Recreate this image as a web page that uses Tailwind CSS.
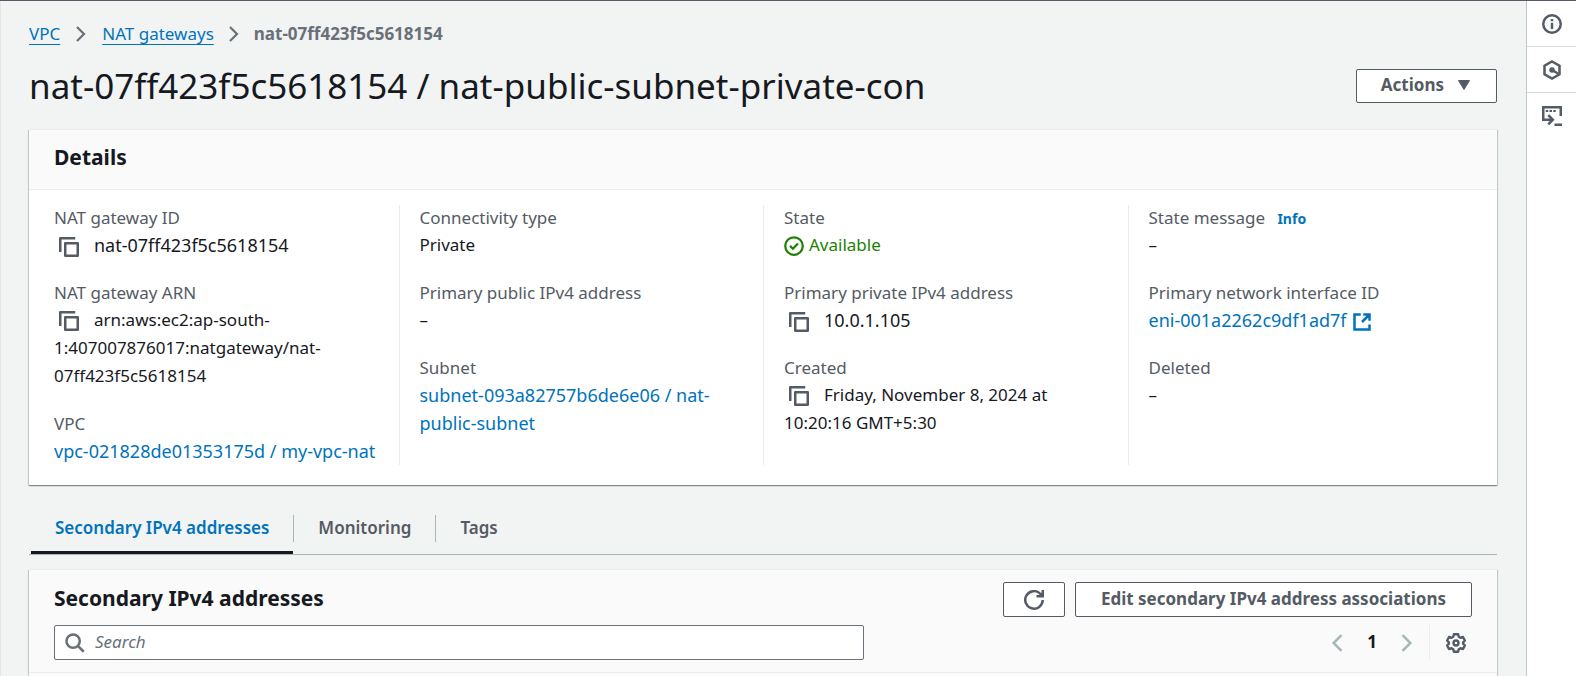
<!DOCTYPE html>
<html lang="en">
<head>
<meta charset="utf-8">
<meta name="viewport" content="width=device-width, initial-scale=1">
<title>NAT gateway details</title>
<script src="https://cdn.jsdelivr.net/npm/@tailwindcss/browser@4"></script>
</head>
<body class="bg-[#f2f3f3] font-['Noto_Sans','Open_Sans',sans-serif] text-[17px] leading-[28px] text-[#16191f]">
<svg class="hidden" aria-hidden="true">
  <symbol id="copy" viewBox="0 0 16 16"><path d="M1 12V1h12M5 5h10v10H5z" fill="none" stroke="currentColor" stroke-width="2" stroke-linejoin="round"/></symbol>
  <symbol id="chevron" viewBox="0 0 16 16"><path d="M4 1l7 7-7 7" fill="none" stroke="currentColor" stroke-width="2.200"/></symbol>
</svg>
<div class="flex min-h-screen border-t border-[#545b64]">
  <main class="flex min-w-0 flex-1 flex-col border-l border-[#e3e6e6] pr-[29px] pl-7 pt-[19px]">
    <nav aria-label="Breadcrumb">
      <ol class="flex items-center leading-[28px] text-[#687078]">
        <li><a href="#" class="text-[#0073bb] underline underline-offset-4">VPC</a></li>
        <li class="px-[13px]"><svg class="size-4" aria-hidden="true"><use href="#chevron"/></svg></li>
        <li><a href="#" class="text-[#0073bb] underline underline-offset-4">NAT gateways</a></li>
        <li class="px-3"><svg class="size-4" aria-hidden="true"><use href="#chevron"/></svg></li>
        <li class="font-bold" aria-current="page">nat-07ff423f5c5618154</li>
      </ol>
    </nav>
    <header class="flex items-center justify-between pt-[15px]">
      <h1 class="text-[35px] leading-[45px]">nat-07ff423f5c5618154 / nat-public-subnet-private-con</h1>
      <button type="button" class="flex h-[34px] items-center gap-3 rounded-xs border border-[#545b64] bg-white px-6 pb-px font-bold text-[#545b64]">Actions
        <svg class="size-4" viewBox="0 0 16 16" aria-hidden="true"><path d="M2.500 3.500h11L8 12.500z" fill="currentColor" stroke="currentColor" stroke-linejoin="round"/></svg>
      </button>
    </header>

    <section class="mt-[21px] border-t border-[#eaeded] bg-white shadow-[0_1px_1px_0_rgba(0,28,36,0.3),1px_1px_1px_0_rgba(0,28,36,0.15),-1px_1px_1px_0_rgba(0,28,36,0.15)]">
      <h2 class="border-b border-[#eaeded] bg-[#fafafa] px-[25px] pt-3 pb-4 text-[21px] leading-[31px] font-bold">Details</h2>
      <div class="grid grid-cols-4 px-[5px] pt-[15px] pb-5">
        <dl class="flex flex-col gap-[21px] px-5">
          <div>
            <dt class="leading-[26px] text-[#545b64]">NAT gateway ID</dt>
            <dd class="text-[18px]"><button type="button" aria-label="Copy NAT gateway ID" class="mr-[15px] ml-[5px] align-[-5px] text-[#545b64]"><svg class="size-5"><use href="#copy"/></svg></button>nat-07ff423f5c5618154</dd>
          </div>
          <div>
            <dt class="leading-[26px] text-[#545b64]">NAT gateway ARN</dt>
            <dd><button type="button" aria-label="Copy NAT gateway ARN" class="mr-[15px] ml-[5px] align-[-5px] text-[#545b64]"><svg class="size-5"><use href="#copy"/></svg></button>arn:aws:ec2:ap-south-<wbr>1:407007876017:natgateway/nat-<wbr>07ff423f5c5618154</dd>
          </div>
          <div>
            <dt class="leading-[26px] text-[#545b64]">VPC</dt>
            <dd class="text-[18px]"><a href="#" class="text-[#0073bb]">vpc-021828de01353175d / my-vpc-nat</a></dd>
          </div>
        </dl>
        <dl class="flex flex-col gap-[21px] border-l border-[#eaeded] px-5">
          <div>
            <dt class="leading-[26px] text-[#545b64]">Connectivity type</dt>
            <dd>Private</dd>
          </div>
          <div>
            <dt class="leading-[26px] text-[#545b64]">Primary public IPv4 address</dt>
            <dd>–</dd>
          </div>
          <div>
            <dt class="leading-[26px] text-[#545b64]">Subnet</dt>
            <dd class="text-[18px]"><a href="#" class="text-[#0073bb]">subnet-093a82757b6de6e06 / nat-<wbr>public-subnet</a></dd>
          </div>
        </dl>
        <dl class="flex flex-col gap-[21px] border-l border-[#eaeded] px-5">
          <div>
            <dt class="leading-[26px] text-[#545b64]">State</dt>
            <dd class="text-[#1d8102]"><svg class="mr-[5px] inline size-5 align-[-5px]" viewBox="0 0 16 16" fill="none" stroke="currentColor" stroke-width="1.800" aria-hidden="true"><circle cx="8" cy="8" r="7"/><path d="M4.800 7.900l2.300 2.300L11.200 6"/></svg>Available</dd>
          </div>
          <div>
            <dt class="leading-[26px] text-[#545b64]">Primary private IPv4 address</dt>
            <dd class="text-[18px]"><button type="button" aria-label="Copy private IPv4 address" class="mr-[15px] ml-[5px] align-[-5px] text-[#545b64]"><svg class="size-5"><use href="#copy"/></svg></button>10.0.1.105</dd>
          </div>
          <div>
            <dt class="leading-[26px] text-[#545b64]">Created</dt>
            <dd><button type="button" aria-label="Copy creation time" class="mr-[15px] ml-[5px] align-[-5px] text-[#545b64]"><svg class="size-5"><use href="#copy"/></svg></button>Friday, November 8, 2024 at 10:20:16 GMT+5:30</dd>
          </div>
        </dl>
        <dl class="flex flex-col gap-[21px] border-l border-[#eaeded] px-5">
          <div>
            <dt class="leading-[26px] text-[#545b64]">State message <a href="#" class="ml-2 text-[14px] leading-none font-bold text-[#0073bb]">Info</a></dt>
            <dd>–</dd>
          </div>
          <div>
            <dt class="leading-[26px] text-[#545b64]">Primary network interface ID</dt>
            <dd class="text-[18px]"><a href="#" class="text-[#0073bb]">eni-001a2262c9df1ad7f<svg class="ml-[5px] inline size-5 align-[-5px]" viewBox="0 0 16 16" fill="none" stroke="currentColor" stroke-width="2" aria-hidden="true"><path d="M7 2H2v12h12V10M9 2h5v5M14 2L8 8"/></svg></a></dd>
          </div>
          <div>
            <dt class="leading-[26px] text-[#545b64]">Deleted</dt>
            <dd>–</dd>
          </div>
        </dl>
      </div>
    </section>

    <div role="tablist" class="mt-[26px] flex border-b border-[#aab7b8] font-semibold text-[#545b64]">
      <button type="button" role="tab" aria-selected="true" class="ml-[2px] border-b-3 border-[#16191f] px-6 pt-[3px] pb-[9px] text-[#0073bb]">Secondary IPv4 addresses</button>
      <button type="button" role="tab" aria-selected="false" class="mt-1 mb-3 border-l border-[#aab7b8] px-6 leading-[26px] pb-px">Monitoring</button>
      <button type="button" role="tab" aria-selected="false" class="mt-1 mb-3 border-l border-[#aab7b8] px-6 leading-[26px] pb-px">Tags</button>
    </div>

    <section class="mt-[14px] flex-1 border-t border-[#eaeded] bg-[#fafafa] shadow-[0_1px_1px_0_rgba(0,28,36,0.3),1px_1px_1px_0_rgba(0,28,36,0.15),-1px_1px_1px_0_rgba(0,28,36,0.15)]">
      <div class="border-b border-[#eaeded] px-[25px] pt-3 pb-3">
        <div class="flex items-center gap-[10px]">
          <h2 class="flex-1 pb-[2px] text-[21px] leading-[31px] font-bold">Secondary IPv4 addresses</h2>
          <button type="button" aria-label="Refresh" class="flex h-[35px] items-center rounded-xs border border-[#545b64] bg-white px-5 text-[#545b64]"><svg class="size-5" viewBox="0 0 16 16" fill="none" stroke="currentColor" stroke-width="2" aria-hidden="true"><path d="M15 8a7 7 0 1 1-2-5l1 1.500M15 0v5h-5"/></svg></button>
          <button type="button" class="h-[35px] rounded-xs border border-[#545b64] bg-white px-[25px] pb-px font-bold text-[#545b64]">Edit secondary IPv4 address associations</button>
        </div>
        <div class="mt-2 flex items-center justify-between">
          <label class="flex h-[35px] w-4/7 items-center gap-[10px] rounded-xs border border-[#687078] bg-white px-[10px] text-[#687078]">
            <svg class="size-5" viewBox="0 0 16 16" fill="none" stroke="currentColor" stroke-width="2" aria-hidden="true"><circle cx="6.500" cy="6.500" r="5.300"/><path d="M10.300 10.300L15 15"/></svg>
            <input type="search" aria-label="Search" placeholder="Search" class="min-w-0 flex-1 pb-px outline-none placeholder:text-[#687078] placeholder:italic">
          </label>
          <div class="flex h-[35px] items-center text-[#aab7b8]">
            <button type="button" aria-label="Previous page"><svg class="size-[18px] -scale-x-100" aria-hidden="true"><use href="#chevron"/></svg></button>
            <span class="px-[21px] pb-px font-bold text-[#16191f]">1</span>
            <button type="button" aria-label="Next page"><svg class="size-[18px]" aria-hidden="true"><use href="#chevron"/></svg></button>
            <span class="ml-[13px] h-full border-l border-[#eaeded]"></span>
            <button type="button" aria-label="Preferences" class="pr-[6px] pl-4 text-[#545b64]"><svg class="size-5" viewBox="0 0 16 16" fill="none" stroke="currentColor" stroke-width="1.900" stroke-linejoin="round" aria-hidden="true"><path d="M6.300 1h3.400l.5 2 1.400.8 2-.6 1.500 2.800L13.700 7.500v1l1.400 1.500-1.500 2.800-2-.6-1.400.8-.5 2H6.300l-.5-2-1.400-.8-2 .6L.9 10l1.400-1.500v-1L.9 6l1.500-2.800 2 .6L5.800 3z"/><circle cx="8" cy="8" r="2"/></svg></button>
          </div>
        </div>
      </div>
    </section>
  </main>

  <aside aria-label="Tools" class="flex w-[50px] flex-col border-l border-[#bfc8c9] bg-white text-[#545b64]">
    <button type="button" aria-label="Info panel" class="flex h-[46px] items-center justify-center border-b border-[#d5dbdb]"><svg class="size-5" viewBox="0 0 16 16" fill="none" stroke="currentColor" stroke-width="2"><circle cx="8" cy="8" r="7"/><path d="M8 7v5M8 4v1.800"/></svg></button>
    <button type="button" aria-label="Diagnostics" class="flex h-[46px] items-center justify-center border-b border-[#d5dbdb]"><svg class="size-5" viewBox="0 0 16 16" fill="none" stroke="currentColor" stroke-width="2"><path d="M8 1.200l6 3.400v6.800l-6 3.400-6-3.400V4.600z"/><path d="M8 8l5 3"/><circle cx="8" cy="8" r="2.200" fill="currentColor" stroke="none"/></svg></button>
    <button type="button" aria-label="Terminal" class="flex h-[46px] items-center justify-center"><svg class="size-5" viewBox="0 0 16 16" fill="none" stroke="currentColor" stroke-width="2"><path d="M15 8V1H1v10h7M5 7.300L8.700 11 5 14.700M10 15h6"/><path d="M3 4h2M6 4h2M9 4h2" stroke-width="1.500"/></svg></button>
  </aside>
</div>
</body>
</html>
